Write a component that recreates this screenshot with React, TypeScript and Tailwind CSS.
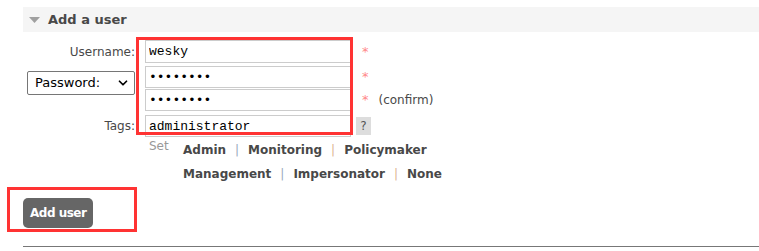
import { ChevronDown } from "lucide-react";

const inputCls =
  "block w-[206px] border border-[#ccc] bg-white px-[3px] font-['Liberation_Mono',monospace] text-[13px] text-black outline-none";

const Star = () => <span className="ml-[11px] text-[13px] text-[#f88]">*</span>;

const App = () => {
  return (
    <div className="relative h-[251px] w-[759px] overflow-hidden bg-white font-['DejaVu_Sans',Verdana,sans-serif] text-[12px] text-[#484848]">
      {/* section header */}
      <div className="ml-[23px] mt-[7px] flex h-[25px] items-center bg-[#f5f5f5]">
        <svg width="11" height="6" viewBox="0 0 11 6" className="ml-[6px] mr-[8px]">
          <path d="M0 0 L11 0 L5.5 6 Z" fill="#a0a0a0" />
        </svg>
        <span className="text-[13px] font-bold text-[#484848]">Add a user</span>
      </div>

      {/* username */}
      <div className="mt-[8px] flex h-[23px] items-center">
        <label className="w-[136px] pr-[1px] text-right">Username:</label>
        <div className="ml-[9px] flex items-center">
          <input readOnly value="wesky" className={inputCls + " h-[23px]"} />
          <Star />
        </div>
      </div>

      {/* password + confirm */}
      <div className="mt-[3px] flex">
        <div className="ml-[27px] mt-[5px] flex h-[24px] w-[108px] items-center justify-between rounded-[2px] border border-[#767676] bg-white pl-[7px] pr-[4px] text-[13px] text-black">
          <span>Password:</span>
          <ChevronDown size={14} strokeWidth={3} />
        </div>
        <div className="ml-[10px] flex flex-col gap-[1px]">
          <div className="flex items-center">
            <input readOnly type="password" value="12345678" className={inputCls + " h-[22px]"} />
            <Star />
          </div>
          <div className="flex items-center">
            <input readOnly type="password" value="12345678" className={inputCls + " h-[22px]"} />
            <Star />
            <span className="ml-[10px] text-[12px] text-[#484848]">(confirm)</span>
          </div>
        </div>
      </div>

      {/* tags */}
      <div className="mt-[4px] flex h-[22px] items-center">
        <label className="w-[136px] pr-[1px] text-right">Tags:</label>
        <div className="ml-[9px] flex items-center">
          <input readOnly value="administrator" className={inputCls + " h-[22px]"} />
          <span className="ml-[5px] flex h-[18px] w-[15px] items-center justify-center bg-[#ddd] text-[12px] text-[#555]">
            ?
          </span>
        </div>
      </div>

      {/* tag shortcuts */}
      <div className="ml-[149px] mt-[1px] flex">
        <span className="w-[34px] text-[12px] leading-[16px] text-[#999]">Set</span>
        <div className="text-[12px] font-bold leading-[24px] text-[#484848]">
          <div>
            <span>Admin</span>
            <span className="mx-[9px] font-normal text-[#9ab]">|</span>
            <span>Monitoring</span>
            <span className="mx-[9px] font-normal text-[#dcb590]">|</span>
            <span>Policymaker</span>
          </div>
          <div>
            <span>Management</span>
            <span className="mx-[9px] font-normal text-[#9ab]">|</span>
            <span>Impersonator</span>
            <span className="mx-[9px] font-normal text-[#dcb590]">|</span>
            <span>None</span>
          </div>
        </div>
      </div>

      {/* submit */}
      <button className="ml-[23px] mt-[12px] h-[30px] rounded-[5px] bg-[#666] px-[7px] text-[12px] font-bold tracking-[-0.5px] text-white">
        Add user
      </button>

      <div className="ml-[23px] mt-[18px] border-t border-[#777]" />

      {/* annotation boxes */}
      <div className="absolute left-[136px] top-[37px] h-[98px] w-[217px] border-[3px] border-[#f33]" />
      <div className="absolute left-[7px] top-[187px] h-[45px] w-[130px] border-[3px] border-[#f33]" />
    </div>
  );
};

export default App;
